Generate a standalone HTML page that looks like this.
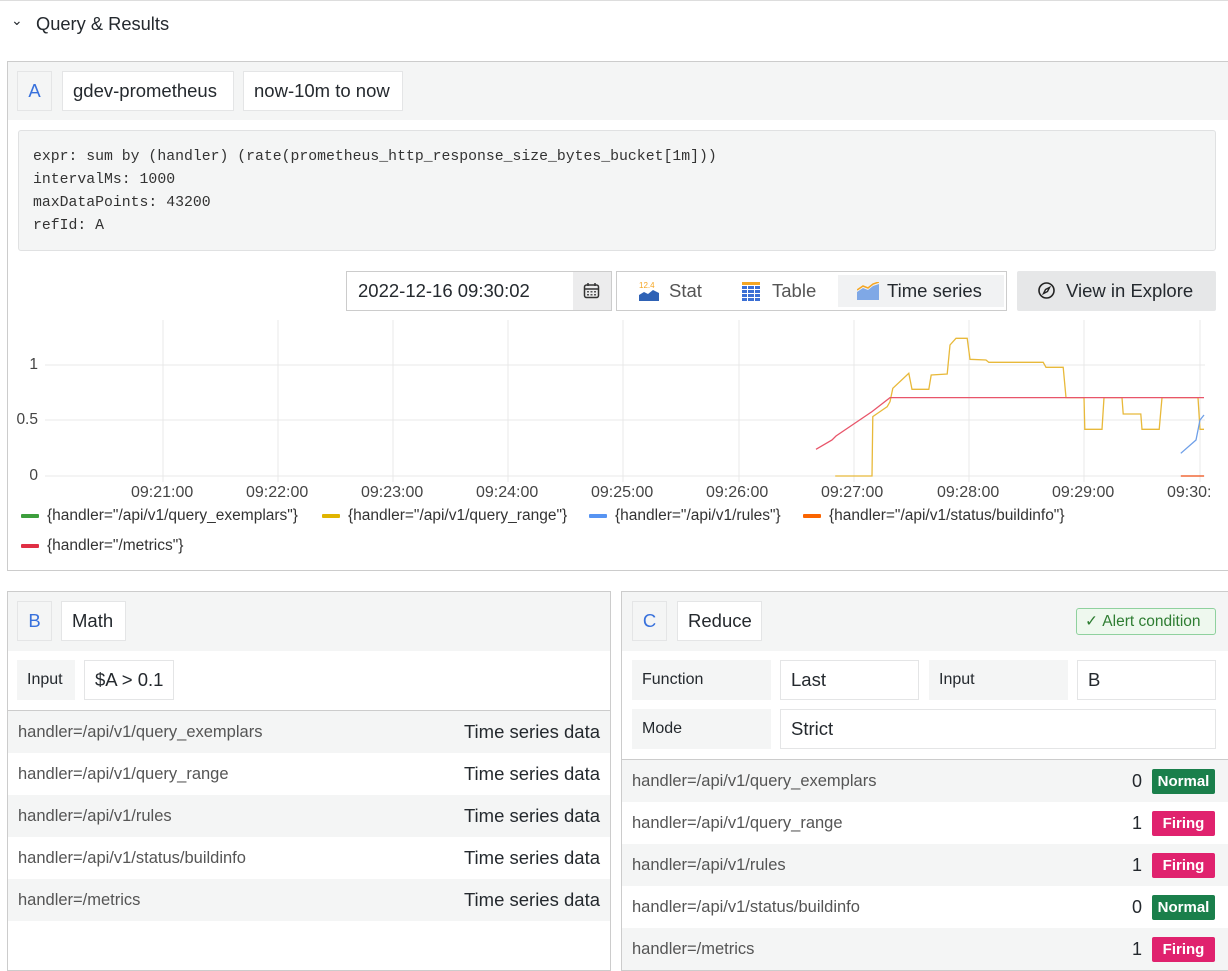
<!DOCTYPE html>
<html><head><meta charset="utf-8"><style>
*{box-sizing:border-box;margin:0;padding:0}
body{width:1228px;height:962px;overflow:hidden;background:#fff;font-family:"Liberation Sans",sans-serif;color:#24292e;position:relative}
.a{position:absolute}
.box{position:absolute;border:1px solid #e4e5e6;background:#fff;display:flex;align-items:center;font-size:18.5px;padding-left:10px;white-space:nowrap}
.ref{color:#3871dc;background:#f4f5f5;justify-content:center;padding:0}
.lbl{position:absolute;background:#f4f5f5;display:flex;align-items:center;font-size:16px;padding-left:10px;color:#24292e}
.row{position:absolute;height:42px;display:flex;align-items:center;font-size:16.5px;color:#555;padding-left:10px;white-space:nowrap}
.g{background:#f4f5f5}
.tsd{position:absolute;right:10px;color:#24292e;font-size:18.5px}
.badge{position:absolute;right:13px;width:63px;height:25px;color:#fff;font-weight:bold;font-size:15px;display:flex;align-items:center;justify-content:center;border-radius:2px}
.n{background:#1a7f4b}.f{background:#e0226e}
.num{position:absolute;right:86px;font-size:18px;color:#24292e}
.mono{font-family:"Liberation Mono",monospace;font-size:14.8px;color:#333;line-height:23px;white-space:nowrap}
.yl{position:absolute;font-size:15.5px;color:#444;width:30px;text-align:right}
.xl{position:absolute;font-size:16px;color:#444;top:484px}
.leg{position:absolute;font-size:15.5px;color:#333;display:flex;align-items:center;white-space:nowrap}
.leg i{display:inline-block;width:18px;height:4px;margin-right:8px;border-radius:1px}
</style></head><body>
<div class="a" style="left:0;top:0;width:1228px;height:1px;background:#ddd"></div>
<div class="a" style="left:11px;top:12px;font-size:14px">&#8964;</div>
<div class="a" style="left:36px;top:13px;font-size:18.3px">Query &amp; Results</div>

<!-- Panel A -->
<div class="a" style="left:7px;top:61px;width:1230px;height:510px;border:1px solid #ccc"></div>
<div class="a" style="left:8px;top:62px;width:1220px;height:58px;background:#f4f5f5"></div>
<div class="box ref" style="left:17px;top:71px;width:35px;height:40px">A</div>
<div class="box" style="left:62px;top:71px;width:172px;height:40px">gdev-prometheus</div>
<div class="box" style="left:243px;top:71px;width:160px;height:40px">now-10m to now</div>
<div class="a mono" style="left:18px;top:130px;width:1198px;height:121px;background:#f4f5f5;border:1px solid #e0e1e2;border-radius:3px;padding:15px 0 0 14px">expr: sum by (handler) (rate(prometheus_http_response_size_bytes_bucket[1m]))<br>intervalMs: 1000<br>maxDataPoints: 43200<br>refId: A</div>

<div class="a" style="left:346px;top:271px;width:266px;height:40px;border:1px solid #ccc;background:#fff"></div>
<div class="a" style="left:358px;top:280px;font-size:18.5px">2022-12-16 09:30:02</div>
<div class="a" style="left:573px;top:272px;width:38px;height:38px;background:#ececed"></div>
<svg class="a" style="left:583px;top:282px" width="17" height="17" viewBox="0 0 17 17"><rect x="1.5" y="3" width="14" height="12.5" rx="2" fill="none" stroke="#333" stroke-width="1.5"/><line x1="1.5" y1="7" x2="15.5" y2="7" stroke="#333" stroke-width="1.5"/><line x1="5" y1="1" x2="5" y2="4" stroke="#333" stroke-width="1.5"/><line x1="12" y1="1" x2="12" y2="4" stroke="#333" stroke-width="1.5"/><g fill="#555"><rect x="4" y="9" width="2" height="1.5"/><rect x="7.5" y="9" width="2" height="1.5"/><rect x="11" y="9" width="2" height="1.5"/><rect x="4" y="12" width="2" height="1.5"/><rect x="7.5" y="12" width="2" height="1.5"/><rect x="11" y="12" width="2" height="1.5"/></g></svg>

<div class="a" style="left:616px;top:271px;width:391px;height:40px;border:1px solid #ccc;background:#fff"></div>
<div class="a" style="left:838px;top:275px;width:166px;height:32px;background:#f1f2f3"></div>
<svg class="a" style="left:638px;top:281px" width="22" height="20"><text x="1" y="7" font-size="8" fill="#f5a623" font-family="Liberation Sans">12.4</text><path d="M1 14 L6 11 L10 13 L15 9 L21 12 L21 20 L1 20Z" fill="#2f62b5"/></svg>
<div class="a" style="left:669px;top:280px;font-size:18.5px;color:#555">Stat</div>
<svg class="a" style="left:742px;top:282px" width="18" height="19"><g fill="#3b6fd4"><rect x="0" y="0" width="18" height="3" fill="#f5a623"/><rect x="0" y="4" width="5" height="3"/><rect x="6" y="4" width="6" height="3"/><rect x="13" y="4" width="5" height="3"/><rect x="0" y="8" width="5" height="3"/><rect x="6" y="8" width="6" height="3"/><rect x="13" y="8" width="5" height="3"/><rect x="0" y="12" width="5" height="3"/><rect x="6" y="12" width="6" height="3"/><rect x="13" y="12" width="5" height="3"/><rect x="0" y="16" width="5" height="3"/><rect x="6" y="16" width="6" height="3"/><rect x="13" y="16" width="5" height="3"/></g></svg>
<div class="a" style="left:772px;top:280px;font-size:18.5px;color:#555">Table</div>
<svg class="a" style="left:857px;top:282px" width="22" height="18"><path d="M0 10 L6 6 L11 8 L16 4 L22 2 L22 18 L0 18Z" fill="#7fa8e6"/><path d="M0 8 L6 4 L11 6 L16 2 L22 0" stroke="#f5a623" stroke-width="1.5" fill="none"/></svg>
<div class="a" style="left:887px;top:280px;font-size:18.5px">Time series</div>

<div class="a" style="left:1017px;top:271px;width:199px;height:40px;background:#e6e7e8;border-radius:2px"></div>
<svg class="a" style="left:1037px;top:281px" width="19" height="19" viewBox="0 0 19 19"><circle cx="9.5" cy="9.5" r="7.5" fill="none" stroke="#222" stroke-width="1.6"/><path d="M12.5 6.5 L10.5 10.5 L6.5 12.5 L8.5 8.5Z" fill="none" stroke="#222" stroke-width="1.4"/></svg>
<div class="a" style="left:1066px;top:280px;font-size:18.5px">View in Explore</div>

<!-- chart -->
<svg class="a" style="left:0;top:0" width="1228" height="570">
<g stroke="#e8e8e8" stroke-width="1">
<line x1="45" y1="365" x2="1205" y2="365"/><line x1="45" y1="420" x2="1205" y2="420"/><line x1="45" y1="476" x2="1205" y2="476"/>
<line x1="163" y1="320" x2="163" y2="482"/><line x1="278" y1="320" x2="278" y2="482"/><line x1="393" y1="320" x2="393" y2="482"/><line x1="508" y1="320" x2="508" y2="482"/><line x1="623" y1="320" x2="623" y2="482"/><line x1="739" y1="320" x2="739" y2="482"/><line x1="854" y1="320" x2="854" y2="482"/><line x1="969" y1="320" x2="969" y2="482"/><line x1="1084" y1="320" x2="1084" y2="482"/><line x1="1200" y1="320" x2="1200" y2="482"/>
</g>
<g transform="translate(600,260) scale(0.4,0.3333)" fill="none">
<path vector-effect="non-scaling-stroke" stroke="#e8b93a" stroke-width="1.3" d="M588 648 L680 648 L682 470 L700 455 L718 440 L725 425 L732 385 L772 340 L780 388 L822 388 L828 345 L868 342 L875 255 L890 235 L918 235 L925 298 L965 300 L972 307 L1108 307 L1115 322 L1158 322 L1165 413 L1210 413 L1212 508 L1255 508 L1260 413 L1305 413 L1308 462 L1352 462 L1355 508 L1398 508 L1405 413 L1495 413 L1500 508 L1510 508"/>
<path vector-effect="non-scaling-stroke" stroke="#e8556a" stroke-width="1.3" d="M540 568 L580 540 L590 528 L680 455 L725 413 L1510 413"/>
<path vector-effect="non-scaling-stroke" stroke="#6e9fe8" stroke-width="1.3" d="M1452 580 L1490 540 L1500 480 L1510 465"/>
<path vector-effect="non-scaling-stroke" stroke="#f06a3a" stroke-width="1.5" d="M1452 648 L1510 648"/>
</g>
</svg>
<div class="yl" style="left:8px;top:356px">1</div>
<div class="yl" style="left:8px;top:411px">0.5</div>
<div class="yl" style="left:8px;top:467px">0</div>
<div class="xl" style="left:131px">09:21:00</div><div class="xl" style="left:246px">09:22:00</div><div class="xl" style="left:361px">09:23:00</div><div class="xl" style="left:476px">09:24:00</div><div class="xl" style="left:591px">09:25:00</div><div class="xl" style="left:706px">09:26:00</div><div class="xl" style="left:821px">09:27:00</div><div class="xl" style="left:937px">09:28:00</div><div class="xl" style="left:1052px">09:29:00</div><div class="xl" style="left:1167px">09:30:</div>
<div class="leg" style="left:21px;top:507px"><i style="background:#3d9e3d"></i>{handler="/api/v1/query_exemplars"}</div>
<div class="leg" style="left:322px;top:507px"><i style="background:#e0b400"></i>{handler="/api/v1/query_range"}</div>
<div class="leg" style="left:589px;top:507px"><i style="background:#5794f2"></i>{handler="/api/v1/rules"}</div>
<div class="leg" style="left:803px;top:507px"><i style="background:#fa6400"></i>{handler="/api/v1/status/buildinfo"}</div>
<div class="leg" style="left:21px;top:537px"><i style="background:#e02f44"></i>{handler="/metrics"}</div>

<!-- Panel B -->
<div class="a" style="left:7px;top:591px;width:604px;height:380px;border:1px solid #ccc"></div>
<div class="a" style="left:8px;top:592px;width:602px;height:59px;background:#f4f5f5"></div>
<div class="box ref" style="left:17px;top:601px;width:35px;height:40px">B</div>
<div class="box" style="left:61px;top:601px;width:65px;height:40px">Math</div>
<div class="lbl" style="left:17px;top:660px;width:58px;height:40px">Input</div>
<div class="box" style="left:84px;top:660px;width:90px;height:40px">$A &gt; 0.1</div>
<div class="a" style="left:8px;top:710px;width:602px;height:1px;background:#ccc"></div>
<div class="row g" style="left:8px;top:711px;width:602px">handler=/api/v1/query_exemplars<span class="tsd">Time series data</span></div>
<div class="row" style="left:8px;top:753px;width:602px">handler=/api/v1/query_range<span class="tsd">Time series data</span></div>
<div class="row g" style="left:8px;top:795px;width:602px">handler=/api/v1/rules<span class="tsd">Time series data</span></div>
<div class="row" style="left:8px;top:837px;width:602px">handler=/api/v1/status/buildinfo<span class="tsd">Time series data</span></div>
<div class="row g" style="left:8px;top:879px;width:602px">handler=/metrics<span class="tsd">Time series data</span></div>

<!-- Panel C -->
<div class="a" style="left:621px;top:591px;width:620px;height:380px;border:1px solid #ccc"></div>
<div class="a" style="left:622px;top:592px;width:606px;height:59px;background:#f4f5f5"></div>
<div class="box ref" style="left:632px;top:601px;width:35px;height:40px">C</div>
<div class="box" style="left:677px;top:601px;width:85px;height:40px">Reduce</div>
<div class="a" style="left:1076px;top:608px;width:140px;height:27px;border:1px solid #8fd19e;background:#eef8ee;border-radius:3px;color:#2e7d32;font-size:15.5px;display:flex;align-items:center;padding-left:8px;white-space:nowrap">&#10003;&nbsp;Alert condition</div>
<div class="lbl" style="left:632px;top:660px;width:139px;height:40px">Function</div>
<div class="box" style="left:780px;top:660px;width:139px;height:40px">Last</div>
<div class="lbl" style="left:929px;top:660px;width:139px;height:40px">Input</div>
<div class="box" style="left:1077px;top:660px;width:139px;height:40px">B</div>
<div class="lbl" style="left:632px;top:709px;width:139px;height:40px">Mode</div>
<div class="box" style="left:780px;top:709px;width:436px;height:40px">Strict</div>
<div class="a" style="left:622px;top:759px;width:606px;height:1px;background:#ccc"></div>
<div class="row g" style="left:622px;top:760px;width:606px">handler=/api/v1/query_exemplars<span class="num">0</span><span class="badge n">Normal</span></div>
<div class="row" style="left:622px;top:802px;width:606px">handler=/api/v1/query_range<span class="num">1</span><span class="badge f">Firing</span></div>
<div class="row g" style="left:622px;top:844px;width:606px">handler=/api/v1/rules<span class="num">1</span><span class="badge f">Firing</span></div>
<div class="row" style="left:622px;top:886px;width:606px">handler=/api/v1/status/buildinfo<span class="num">0</span><span class="badge n">Normal</span></div>
<div class="row g" style="left:622px;top:928px;width:606px">handler=/metrics<span class="num">1</span><span class="badge f">Firing</span></div>
</body></html>
